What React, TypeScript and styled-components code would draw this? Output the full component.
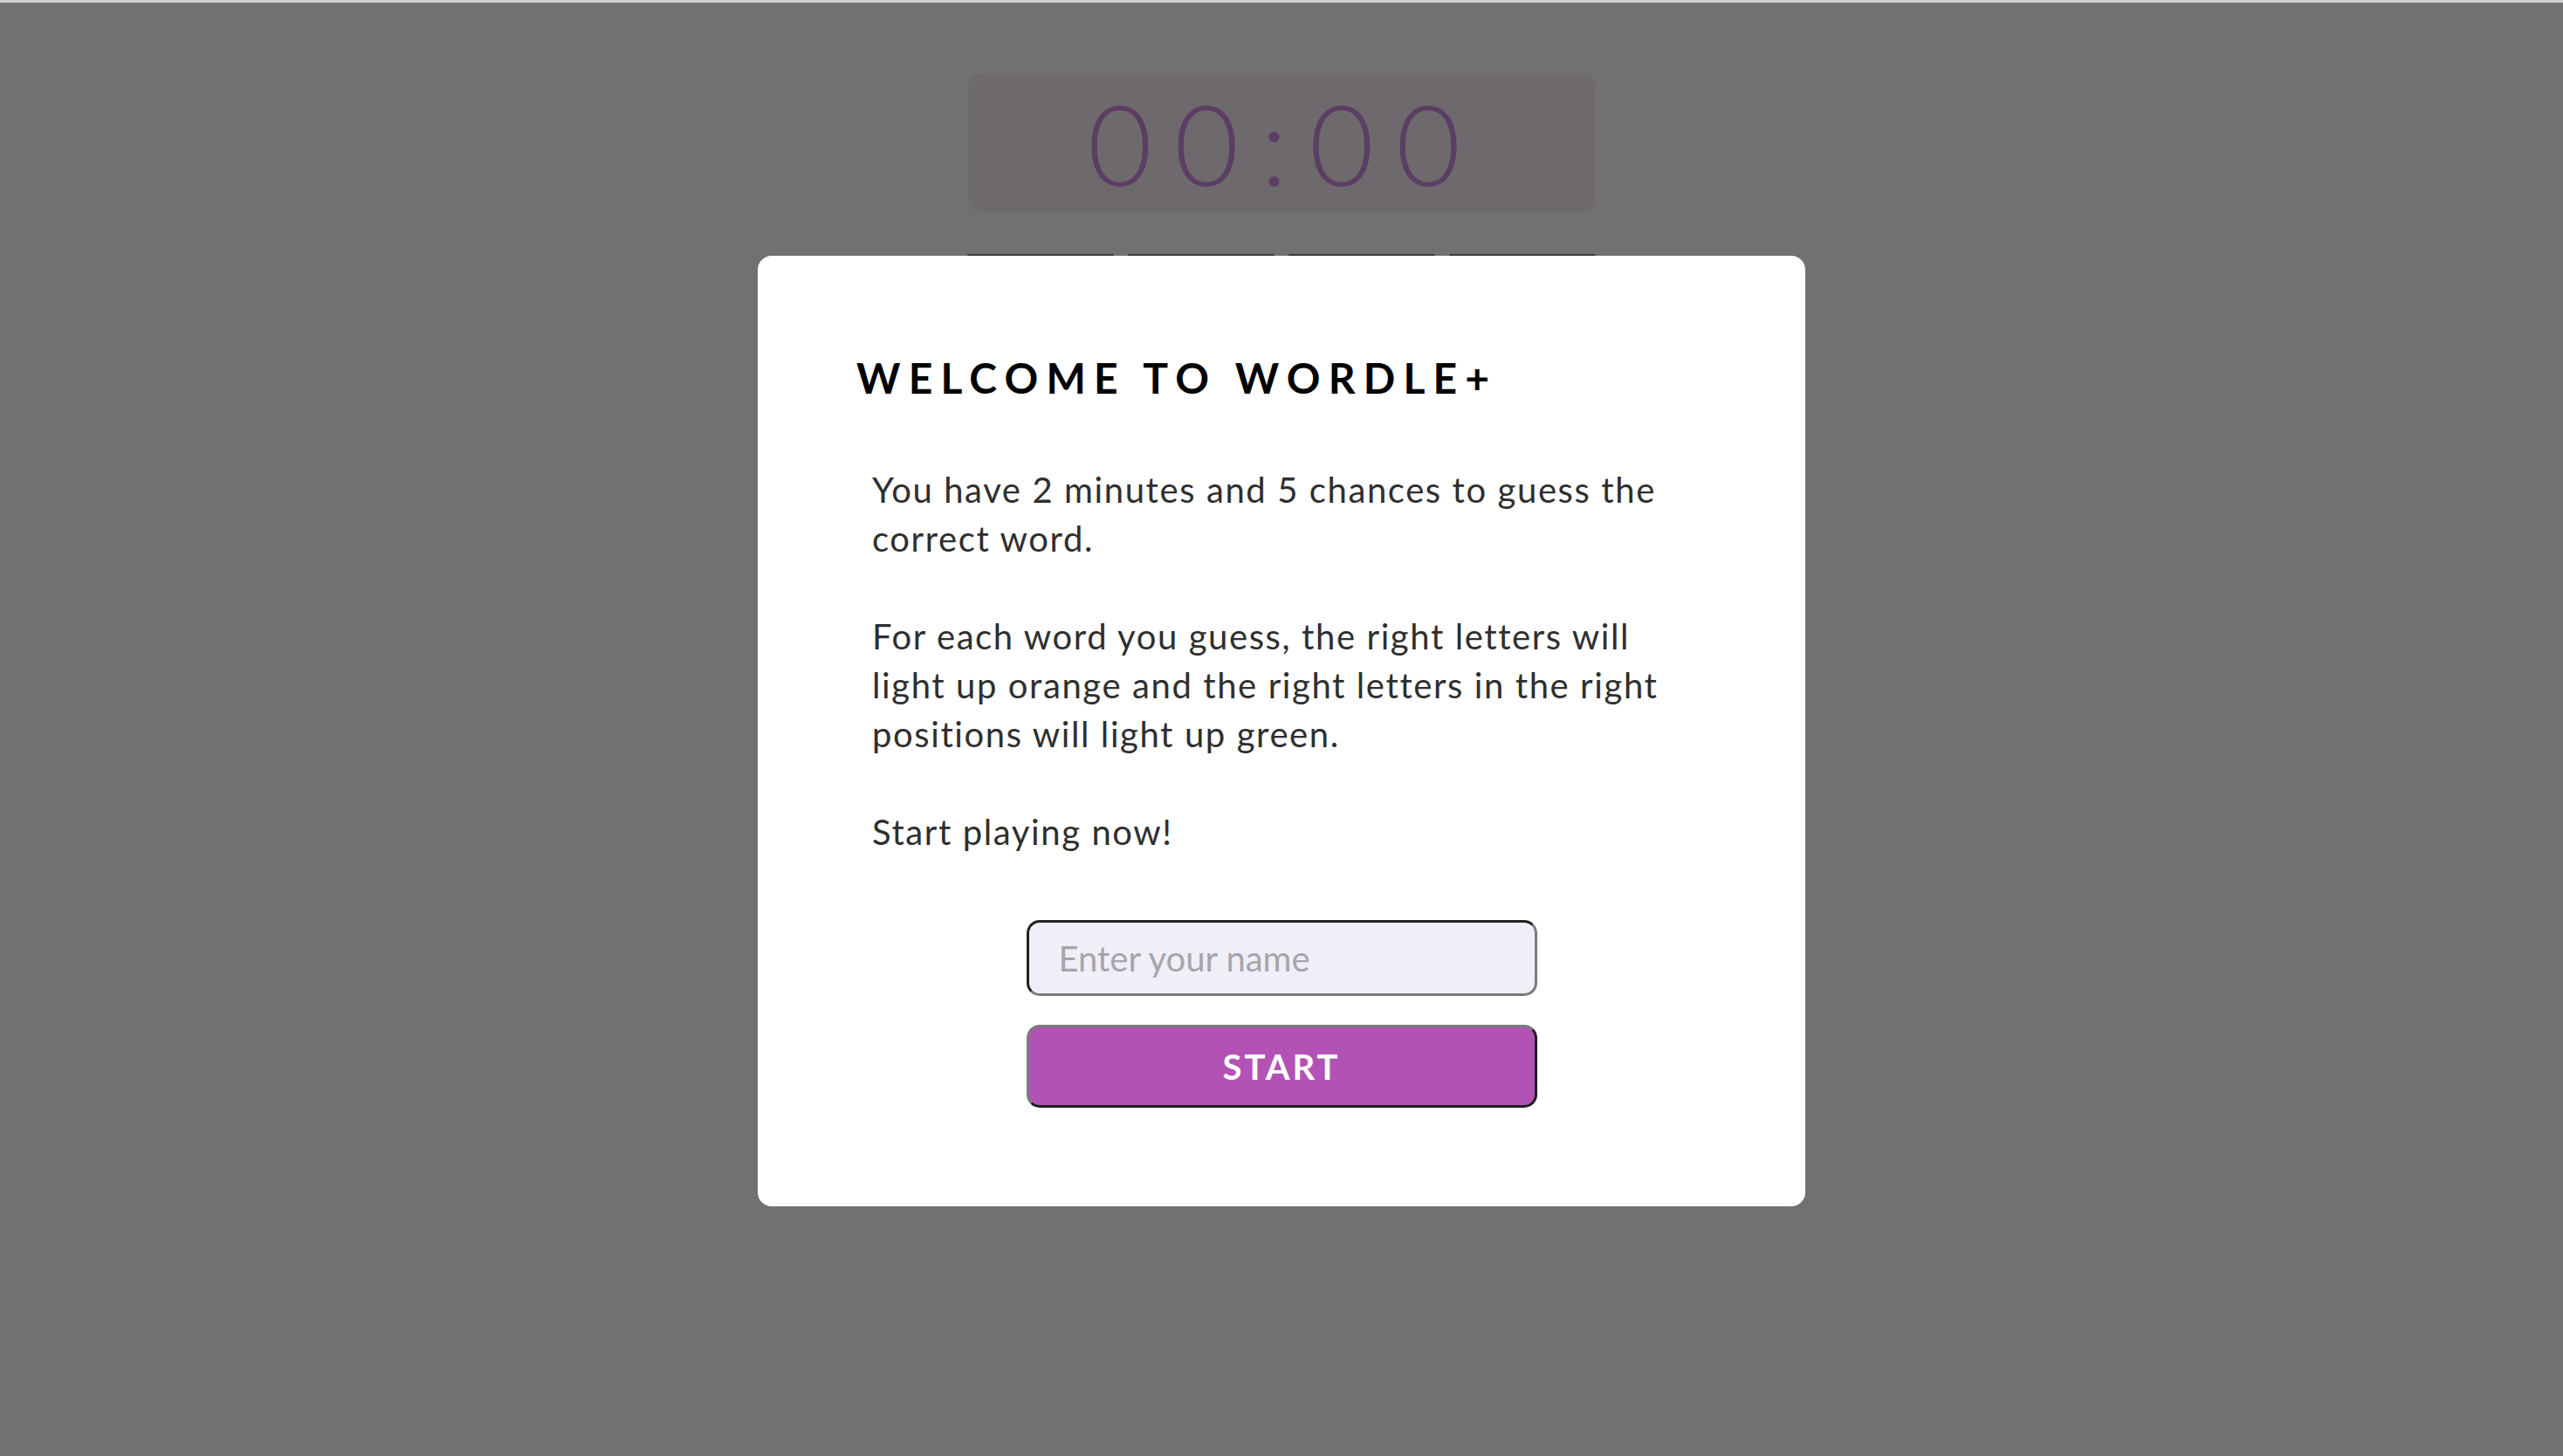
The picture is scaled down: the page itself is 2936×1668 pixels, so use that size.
import { useState } from 'react'
import styled, { createGlobalStyle } from 'styled-components'

const GlobalStyle = createGlobalStyle`
  html, body {
    margin: 0;
    padding: 0;
    background: #ffffff;
    font-family: 'Lato', 'Liberation Sans', sans-serif;
  }
`

const ROWS = 5
const COLS = 4

export default function App() {
  const [name, setName] = useState('')

  return (
    <>
      <GlobalStyle />
      <TopStrip />
      <Board>
        <Timer>00:00</Timer>
        <Grid>
          {Array.from({ length: ROWS * COLS }).map((_, i) => (
            <Tile key={i} />
          ))}
        </Grid>
      </Board>

      <Overlay>
        <Modal>
          <Title>Welcome to Wordle+</Title>
          <Rules>
            <p>You have 2 minutes and 5 chances to guess the correct word.</p>
            <p>
              For each word you guess, the right letters will light up orange
              and the right letters in the right positions will light up green.
            </p>
            <p>Start playing now!</p>
          </Rules>
          <Form onSubmit={(e) => e.preventDefault()}>
            <NameInput
              placeholder='Enter your name'
              value={name}
              onChange={(e) => setName(e.target.value)}
            />
            <StartButton type='submit'>Start</StartButton>
          </Form>
        </Modal>
      </Overlay>
    </>
  )
}

const TopStrip = styled.div`
  height: 3px;
  background: #cfcfcf;
`

const Board = styled.main`
  display: flex;
  flex-direction: column;
  align-items: center;
  padding-top: 81px;
`

const Timer = styled.div`
  width: 719px;
  height: 159px;
  box-sizing: border-box;
  border-radius: 16px;
  background: #f8edf6;
  color: #d08adf;
  font-family: 'Lato', sans-serif;
  font-weight: 300;
  font-size: 128px;
  line-height: 159px;
  letter-spacing: 25px;
  text-align: center;
  padding-left: 8px;
`

const Grid = styled.div`
  margin-top: 48px;
  display: grid;
  grid-template-columns: repeat(${COLS}, 168px);
  grid-auto-rows: 168px;
  gap: 16px;
`

const Tile = styled.div`
  border-top: 2px solid #828282;
  border-radius: 2px;
  background: #ffffff;
`

const Overlay = styled.div`
  position: fixed;
  top: 3px;
  left: 0;
  right: 0;
  bottom: 0;
  padding-top: 4px;
  background: rgba(0, 0, 0, 0.557);
  display: flex;
  align-items: center;
  justify-content: center;
`

const Modal = styled.section`
  width: 1200px;
  box-sizing: border-box;
  padding: 111px 113px 113px;
  background: #ffffff;
  border-radius: 16px;
  display: flex;
  flex-direction: column;
`

const Title = styled.h1`
  margin: 0;
  font-size: 48px;
  line-height: 58px;
  font-weight: 700;
  letter-spacing: 9.2px;
  text-transform: uppercase;
  color: #000000;
`

const Rules = styled.div`
  margin-top: 71px;
  padding: 0 18px;
  display: flex;
  flex-direction: column;
  gap: 56px;

  p {
    margin: 0;
    font-size: 40px;
    line-height: 56px;
    letter-spacing: 1.6px;
    color: #2f2f2f;
  }
`

const Form = styled.form`
  margin-top: 73px;
  display: flex;
  flex-direction: column;
  align-items: center;
  gap: 33px;
`

const NameInput = styled.input`
  width: 585px;
  height: 87px;
  box-sizing: border-box;
  padding: 0 34px;
  border: 3px solid;
  border-color: #222222 #7a7a7a #7a7a7a #222222;
  border-radius: 15px;
  background: #f0eff8;
  font-family: 'Lato', sans-serif;
  font-size: 40px;
  color: #222222;
  outline: none;

  &::placeholder {
    color: #a6a5ab;
  }
`

const StartButton = styled.button`
  width: 585px;
  height: 95px;
  box-sizing: border-box;
  border: 3px solid;
  border-color: #7a7a7a #1e1e1e #1e1e1e #7a7a7a;
  border-radius: 15px;
  background: #b352b5;
  color: #ffffff;
  font-family: 'Lato', sans-serif;
  font-weight: 700;
  font-size: 40px;
  letter-spacing: 3px;
  text-transform: uppercase;
  cursor: pointer;
`
